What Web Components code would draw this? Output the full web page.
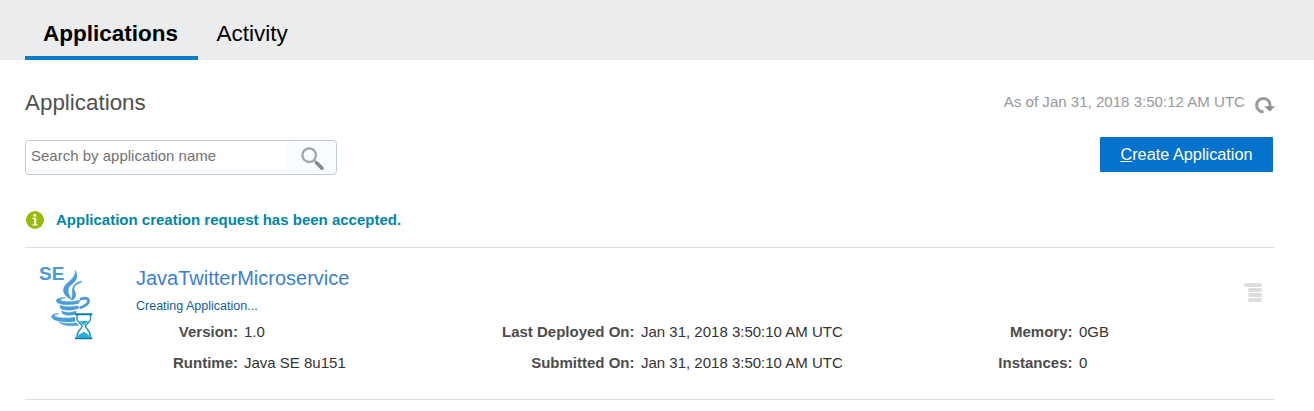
<!DOCTYPE html>
<html lang="en">
<head>
<meta charset="utf-8">
<title>Applications</title>
<style>
body{margin:0;background:#fff;font-family:"Liberation Sans",Arial,sans-serif;font-size:15px;line-height:18px;color:#333}
</style>
</head>
<body>
<app-page></app-page>
<script>
const define = (name, html) => {
  const template = document.createElement('template');
  template.innerHTML = html;
  customElements.define(name, class extends HTMLElement {
    constructor() {
      super();
      this.attachShadow({mode: 'open'}).append(template.content.cloneNode(true));
    }
  });
};

define('nav-tab', `<style>
:host{display:block;box-sizing:border-box;height:60px;padding:20px 19px 0 18.5px;font-size:22.5px;line-height:27px;color:#000;border-bottom:4px solid transparent}
:host([selected]){font-weight:bold;border-bottom-color:#0a7ac8;width:173px;padding-left:18px}
</style><slot></slot>`);

define('tab-bar', `<style>
:host{display:flex;height:60px;padding-left:25px;background:#ebecee}
</style><slot></slot>`);

define('refresh-icon', `<style>:host{display:block;width:20px;height:18px}svg{display:block}</style>
<svg width="20" height="18" viewBox="0 0 20 18"><path d="M8.6 15.8A6.7 6.7 0 1 1 15 9V10.8" fill="none" stroke="#989ca0" stroke-width="3"/><path d="M9.3 10.3H20L14.7 15.6Z" fill="#898d92"/></svg>`);

define('page-heading', `<style>
:host{display:flex;justify-content:space-between;height:60px}
h1{margin:16px 0 0;padding-top:14px;font-size:22.4px;line-height:26px;font-weight:normal;color:#4f4f4f}
.stamp{display:flex;color:#999;padding-top:33px;gap:10px;font-size:15.07px}
refresh-icon{margin-top:3px}
</style><h1><slot></slot></h1><div class="stamp"><slot name="time"></slot><refresh-icon></refresh-icon></div>`);

define('search-box', `<style>
:host{display:flex;box-sizing:border-box;width:312px;height:35px;border:1px solid #bdc9d7;border-radius:4px;background:#f9fcfe;color:#737373;overflow:hidden}
.field{width:261px;height:29px;box-sizing:border-box;padding:6px 0 0 5px;background:#fff;white-space:nowrap}
svg{margin:4px 0 0 12px}
</style><div class="field"><slot></slot></div>
<svg width="28" height="28" viewBox="0 0 28 28" fill="none"><circle cx="10.2" cy="10.2" r="6.8" stroke="#a3a6a9" stroke-width="2.3"/><path d="M15 15L17 17" stroke="#a5a8ab" stroke-width="2"/><path d="M17.5 17.8L23 23.3" stroke="#84888d" stroke-width="3.6" stroke-linecap="round"/></svg>`);

define('primary-button', `<style>
:host{display:block;box-sizing:border-box;width:173px;height:35px;background:#0572ce;color:#fff;text-align:center;font-size:16.3px;line-height:35px;border-radius:1px;margin:-3px 2px 0 0}
</style><slot></slot>`);

define('info-message', `<style>
:host{display:flex;gap:12px;height:20px;align-items:center;color:#0086a8;font-weight:bold}
svg{margin-left:1px}
</style><svg width="18" height="18" viewBox="0 0 18 18"><circle cx="9" cy="9" r="9" fill="#96be09"/><circle cx="8.8" cy="4.2" r="1.5" fill="#fff"/><path d="M6.5 6.8H10.2v6.4h1.4v1.3h-5v-1.3H8V8.1H6.5z" fill="#fff"/></svg><span><slot></slot></span>`);

define('java-icon', `<style>
:host{display:grid;width:56px;height:78px;font-weight:bold;font-size:19px;line-height:20px;color:#4a9ad5}
svg,span{grid-area:1/1}
span{justify-self:start}
</style><svg width="56" height="78" viewBox="0 0 56 78" fill="none">
<g fill="#4a9cd8" stroke="#4a9cd8" stroke-width=".5">
<path d="M36.3 6.5C40 13 37 17 32 21C28 24.5 28 28 33 36C25 32 22.5 27 26 21.5C29 17.5 37 14 36.3 6.5Z"/>
<path d="M42.5 17.5C36 20 32.5 23 35 27C37 30 37 33 33 36C37 28 28 23.5 42.5 17.5Z" stroke-width="1.5"/>
<path d="M27 33.5C21 34.5 20 36.5 24 37.3C30 38.3 37 37.5 41 36L39.5 39.3C32 41.6 22 41 18.5 38.7C14.5 35.5 20 33.3 27 33.5Z"/>
<path d="M21 41.5C27 43.3 34 43 38.5 41.8L40 44C34 47 25 46.5 21.5 44.5Z"/>
<path d="M22.5 47C27 49 33 48.7 37 47V50C32 52 26 51.5 23.5 49.5Z"/>
<path d="M20 49.5C14 50.5 14 52.5 20 53.6C26 54.5 33 54.2 37 53V57.2C31 58.5 19 58 14.5 55.2C10 52 14 49.4 20 49.5Z"/>
<path d="M20 58.3C26 60 34 60 40 58V61C33 62.5 24 62 20 58.3Z"/>
</g><path d="M41 35.5C48 32.5 51 35.5 48.8 39C47 41.5 43.5 43 40.5 43.8" stroke="#4a9cd8" stroke-width="2.8"/>
<path d="M36 50H54V54C54 59 51 60 48 62.5C51 65 54 66 54 70V75H36V70C36 66 39 65 42 62.5C39 60 36 59 36 54Z" fill="#fff"/>
<path d="M38 51V55C38 58.5 43 59.5 43 62.3C43 65 38 66 38 73M51.5 51V55C51.5 58.5 46.5 59.5 46.5 62.3C46.5 65 51.5 66 51.5 73" stroke="#249abc" stroke-width="1.5"/>
<path d="M36 50.3H53.3M36 74.3H53.3" stroke="#087ea7" stroke-width="2"/>
<path d="M40.5 57H49C48 58.8 46 59.8 44.8 61.5C43.2 59.8 41.5 58.8 40.5 57ZM38.5 73C40 69.5 43 69.5 44.8 67.5C46.6 69.5 50 69.5 51 73Z" fill="#23b0dc"/>
</svg><span>SE</span>`);

define('menu-icon', `<style>:host{display:block;width:18px;height:20px}svg{display:block}</style>
<svg width="18" height="20" viewBox="0 0 18 20" fill="#dcdddf"><rect width="18" height="4" rx="2"/><rect x="4" y="5" width="14" height="4" rx="2"/><rect x="4" y="10" width="14" height="4" rx="2"/><rect x="4" y="15" width="14" height="4" rx="2"/></svg>`);

define('detail-field', `<style>
:host{display:grid;grid-template-columns:var(--label,102px) auto;column-gap:var(--gap,6px);line-height:18px;white-space:nowrap}
.label{text-align:right;font-weight:bold;color:#4c4c4c}
</style><span class="label"><slot name="label"></slot></span><span><slot></slot></span>`);

define('application-row', `<style>
:host{display:grid;grid-template-columns:56px 1fr 18px;column-gap:41px;box-sizing:border-box;height:153px;padding:0 13px 0 14px;border-top:1px solid #d9dfe3;border-bottom:1px solid #d9dfe3}
java-icon{margin-top:16px}
.name{margin-top:18px;font-size:20px;line-height:24px;color:#3b7fcd}
.status{font-size:12.5px;line-height:18px;margin-top:7px;color:#145c9e}
.details{display:grid;grid-template-columns:345px 442px 1fr;row-gap:13px;margin:8px -60px 0 0}
menu-icon{margin-top:35px}
</style><java-icon></java-icon>
<div><div class="name"><slot></slot></div><div class="status"><slot name="status"></slot></div><div class="details"><slot name="details"></slot></div></div>
<menu-icon></menu-icon>`);

define('app-page', `<style>
:host{display:block;height:411px;overflow:hidden}
main{padding:0 39px 0 25px}
.tools{display:flex;justify-content:space-between;margin-top:20px}
info-message{margin:35px 0 17px}
.middle{--label:153.5px;--gap:6.5px}.end{--label:149.5px;--gap:6.5px}
</style>
<tab-bar><nav-tab selected>Applications</nav-tab><nav-tab>Activity</nav-tab></tab-bar>
<main>
<page-heading>Applications<span slot="time">As of Jan 31, 2018 3:50:12 AM UTC</span></page-heading>
<div class="tools"><search-box>Search by application name</search-box><primary-button><u>C</u>reate Application</primary-button></div>
<info-message>Application creation request has been accepted.</info-message>
<application-row>JavaTwitterMicroservice<span slot="status">Creating Application...</span>
<detail-field slot="details"><span slot="label">Version:</span>1.0</detail-field>
<detail-field slot="details" class="middle"><span slot="label">Last Deployed On:</span>Jan 31, 2018 3:50:10 AM UTC</detail-field>
<detail-field slot="details" class="end"><span slot="label">Memory:</span>0GB</detail-field>
<detail-field slot="details"><span slot="label">Runtime:</span>Java SE 8u151</detail-field>
<detail-field slot="details" class="middle"><span slot="label">Submitted On:</span>Jan 31, 2018 3:50:10 AM UTC</detail-field>
<detail-field slot="details" class="end"><span slot="label">Instances:</span>0</detail-field>
</application-row>
</main>`);
</script>
</body>
</html>
